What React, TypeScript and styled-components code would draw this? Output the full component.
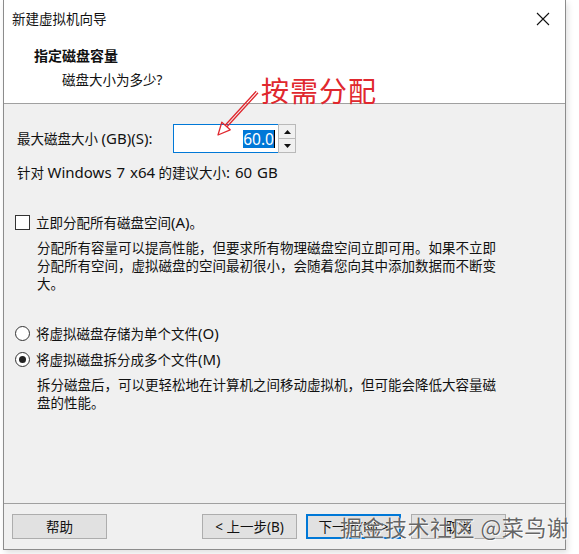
import styled, { createGlobalStyle } from "styled-components";

const GlobalStyle = createGlobalStyle`
  html, body {
    margin: 0;
    background: #ffffff;
  }
  body {
    font-family: "Noto Sans", "Noto Sans CJK SC", sans-serif;
    font-size: 13.5px;
    color: #111;
  }
`;

const Page = styled.div`
  width: 579px;
  height: 554px;
  padding-left: 3px;
  box-sizing: border-box;
  overflow: hidden;
`;

const Window = styled.div`
  position: relative;
  width: 563px;
  height: 550px;
  box-sizing: border-box;
  border: 1px solid #8c8c8c;
  border-top: none;
  display: flex;
  flex-direction: column;
  background: #f0f0f0;
  box-shadow: 2px 3px 6px rgba(0, 0, 0, 0.12);
`;

const Top = styled.div`
  background: #ffffff;
  height: 103px;
  border-bottom: 1px solid #a0a0a0;
  display: flex;
  flex-direction: column;
`;

const TitleBar = styled.div`
  height: 38px;
  display: flex;
  align-items: center;
  justify-content: space-between;
  padding: 0 6px 0 8px;
  line-height: 18px;
`;

const CloseBtn = styled.div`
  width: 32px;
  height: 30px;
  display: flex;
  align-items: center;
  justify-content: center;
`;

const HeaderTitle = styled.div`
  margin: 8px 0 0 30px;
  font-weight: 700;
  font-size: 14px;
  line-height: 20px;
`;

const HeaderSub = styled.div`
  margin: 4px 0 0 58px;
  line-height: 20px;
`;

const Note = styled.div`
  position: absolute;
  left: 257px;
  top: 72px;
  font-family: "Noto Sans CJK SC", sans-serif;
  font-size: 28px;
  line-height: 36px;
  color: #e0282e;
  letter-spacing: 1px;
`;

const Arrow = styled.svg`
  position: absolute;
  left: 210px;
  top: 82px;
`;

const Content = styled.div`
  flex: 1;
  display: flex;
  flex-direction: column;
  padding: 20px 13px 0 13px;
`;

const SizeRow = styled.div`
  display: flex;
  align-items: center;
  height: 29px;
`;

const SizeLabel = styled.span`
  width: 156px;
  line-height: 18px;
`;

const Lt = styled.span`
  font-size: 15px;
  word-spacing: 1px;
`;

const Input = styled.div`
  width: 101px;
  height: 27px;
  border: 1px solid #0078d7;
  background: #fff;
  display: flex;
  align-items: center;
  justify-content: flex-end;
  padding-right: 3px;
  box-sizing: content-box;
`;

const Selected = styled.span`
  background: #0078d7;
  color: #fff;
  font-size: 15.5px;
  line-height: 18px;
  border-right: 1px solid #000;
`;

const Spinner = styled.div`
  display: flex;
  flex-direction: column;
  width: 18px;
  height: 29px;
  margin-left: -1px;
  border: 1px solid #b9b9b9;
  box-sizing: border-box;
`;

const SpinBtn = styled.div`
  flex: 1;
  display: flex;
  align-items: center;
  justify-content: center;
  background: #f0f0f0;
  & + & {
    border-top: 1px solid #b9b9b9;
  }
`;

const Line = styled.div<{ $top: number }>`
  margin-top: ${(p) => p.$top}px;
  line-height: 18px;
`;

const Option = styled.label<{ $top: number }>`
  margin-top: ${(p) => p.$top}px;
  display: flex;
  align-items: center;
  gap: 6px;
  height: 18px;
  line-height: 18px;
`;

const Check = styled.span`
  width: 13px;
  height: 13px;
  border: 1px solid #333;
  background: #fff;
  margin-left: -2px;
`;

const Radio = styled.span<{ $on?: boolean }>`
  width: 13px;
  height: 13px;
  border: 1px solid #333;
  border-radius: 50%;
  background: #fff;
  margin-left: -2px;
  display: flex;
  align-items: center;
  justify-content: center;
  &::after {
    content: "";
    display: ${(p) => (p.$on ? "block" : "none")};
    width: 7px;
    height: 7px;
    border-radius: 50%;
    background: #222;
  }
`;

const Para = styled.div<{ $top: number }>`
  margin-top: ${(p) => p.$top}px;
  padding-left: 20px;
  padding-right: 50px;
  line-height: 18px;
`;

const Footer = styled.div`
  border-top: 1px solid #a0a0a0;
  height: 46px;
  box-sizing: border-box;
  padding: 10px 0 0 8px;
  display: flex;
  position: relative;
`;

const Button = styled.div<{ $primary?: boolean; $gap?: number }>`
  width: 95px;
  height: 25px;
  box-sizing: border-box;
  margin-left: ${(p) => p.$gap ?? 0}px;
  background: #e1e1e1;
  border: 1px solid ${(p) => (p.$primary ? "#0078d7" : "#adadad")};
  box-shadow: ${(p) => (p.$primary ? "inset 0 0 0 1px #0078d7" : "none")};
  display: flex;
  align-items: center;
  justify-content: center;
  line-height: 18px;
  white-space: pre;
`;

const Watermark = styled.div`
  position: absolute;
  left: 336px;
  top: 8px;
  font-family: "Noto Sans CJK SC", sans-serif;
  font-size: 22px;
  line-height: 28px;
  color: rgba(60, 60, 60, 0.8);
  letter-spacing: 0.5px;
  text-shadow: 0 0 1px #fff, 1px 1px 0 rgba(255, 255, 255, 0.8);
  white-space: nowrap;
`;

export default function App() {
  return (
    <Page>
      <GlobalStyle />
      <Window>
        <Top>
          <TitleBar>
            <span>新建虚拟机向导</span>
            <CloseBtn>
              <svg width="14" height="14" viewBox="0 0 14 14">
                <path d="M1 1 L13 13 M13 1 L1 13" stroke="#111" strokeWidth="1.1" />
              </svg>
            </CloseBtn>
          </TitleBar>
          <HeaderTitle>指定磁盘容量</HeaderTitle>
          <HeaderSub>磁盘大小为多少?</HeaderSub>
        </Top>
        <Note>按需分配</Note>
        <Arrow width="60" height="60" viewBox="0 0 60 60">
          <path
            d="M44 10.8 L13 44.8 M42.2 9.2 L11.2 43.2 M4 53 L16.2 47.8 L7.8 40.2 Z"
            stroke="#e0282e"
            strokeWidth="1.3"
            fill="none"
            strokeLinejoin="round"
          />
        </Arrow>
        <Content>
          <SizeRow>
            <SizeLabel>
              最大磁盘大小 <Lt>(GB)(S):</Lt>
            </SizeLabel>
            <Input>
              <Selected>60.0</Selected>
            </Input>
            <Spinner>
              <SpinBtn>
                <svg width="7" height="4" viewBox="0 0 7 4">
                  <path d="M0 4 L3.5 0 L7 4 Z" fill="#111" />
                </svg>
              </SpinBtn>
              <SpinBtn>
                <svg width="7" height="4" viewBox="0 0 7 4">
                  <path d="M0 0 L3.5 4 L7 0 Z" fill="#111" />
                </svg>
              </SpinBtn>
            </Spinner>
          </SizeRow>
          <Line $top={10}>
            针对 <Lt>Windows 7 x64</Lt> 的建议大小<Lt>: 60 GB</Lt>
          </Line>
          <Option $top={31}>
            <Check />
            <span>
              立即分配所有磁盘空间<Lt>(A)</Lt>。
            </span>
          </Option>
          <Para $top={8}>
            分配所有容量可以提高性能，但要求所有物理磁盘空间立即可用。如果不立即分配所有空间，虚拟磁盘的空间最初很小，会随着您向其中添加数据而不断变大。
          </Para>
          <Option $top={31}>
            <Radio />
            <span>
              将虚拟磁盘存储为单个文件<Lt>(O)</Lt>
            </span>
          </Option>
          <Option $top={8}>
            <Radio $on />
            <span>
              将虚拟磁盘拆分成多个文件<Lt>(M)</Lt>
            </span>
          </Option>
          <Para $top={8}>
            拆分磁盘后，可以更轻松地在计算机之间移动虚拟机，但可能会降低大容量磁盘的性能。
          </Para>
        </Content>
        <Footer>
          <Button>帮助</Button>
          <Button $gap={95}>{"< 上一步(B)"}</Button>
          <Button $gap={9} $primary>
            {"下一步(N) >"}
          </Button>
          <Button $gap={10}>取消</Button>
          <Watermark>掘金技术社区 @菜鸟谢</Watermark>
        </Footer>
      </Window>
    </Page>
  );
}
